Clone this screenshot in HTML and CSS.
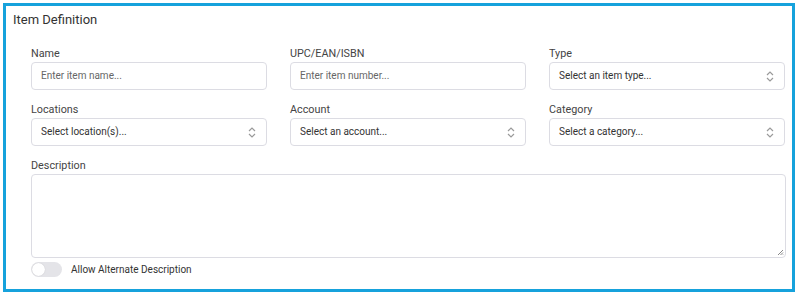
FILE: index.html
```html
<html>
	<head>
		<title>Item Definition</title>
		<link rel="stylesheet" href="styles.css">
	</head>
	<body>
		<div class="card">
			<div class="title">Item Definition</div>
			<div class="form">
				<div class="grid">
					<div class="field">
						<div class="label">Name</div>
						<div class="input">Enter item name...</div>
					</div>
					<div class="field">
						<div class="label">UPC/EAN/ISBN</div>
						<div class="input">Enter item number...</div>
					</div>
					<div class="field">
						<div class="label">Type</div>
						<div class="input select">Select an item type...
							<svg class="chev" width="8" height="11" viewBox="0 0 8 11"><path d="M1 4L4 1L7 4M1 7L4 10L7 7" fill="none" stroke="#9a9a9a" stroke-width="1.2"/></svg>
						</div>
					</div>
					<div class="field">
						<div class="label">Locations</div>
						<div class="input select">Select location(s)...
							<svg class="chev" width="8" height="11" viewBox="0 0 8 11"><path d="M1 4L4 1L7 4M1 7L4 10L7 7" fill="none" stroke="#9a9a9a" stroke-width="1.2"/></svg>
						</div>
					</div>
					<div class="field">
						<div class="label">Account</div>
						<div class="input select">Select an account...
							<svg class="chev" width="8" height="11" viewBox="0 0 8 11"><path d="M1 4L4 1L7 4M1 7L4 10L7 7" fill="none" stroke="#9a9a9a" stroke-width="1.2"/></svg>
						</div>
					</div>
					<div class="field">
						<div class="label">Category</div>
						<div class="input select">Select a category...
							<svg class="chev" width="8" height="11" viewBox="0 0 8 11"><path d="M1 4L4 1L7 4M1 7L4 10L7 7" fill="none" stroke="#9a9a9a" stroke-width="1.2"/></svg>
						</div>
					</div>
				</div>
				<div class="field desc">
					<div class="label">Description</div>
					<div class="textarea">
						<svg class="grip" width="7" height="7" viewBox="0 0 7 7"><path d="M6 1L1 6M6 3.5L3.5 6M6 5.5L5.5 6" stroke="#888" stroke-width="1"/></svg>
					</div>
				</div>
				<div class="toggle-row">
					<div class="toggle"><div class="knob"></div></div>
					<span>Allow Alternate Description</span>
				</div>
			</div>
		</div>
	</body>
</html>
```

FILE: styles.css
```css
body {
    margin: 0;
    font-family: Roboto, "Noto Sans", sans-serif;
    background: #fff;
}
.card {
    margin: 3px 0 0 3px;
    width: 786px;
    height: 283px;
    border: 3px solid #16a2dc;
    box-sizing: content-box;
}
.title {
    font-size: 13px;
    line-height: 20px;
    color: #333;
    padding: 4px 0 0 7px;
}
.form {
    padding: 17px 0 0 25px;
    width: 755px;
}
.grid {
    display: grid;
    grid-template-columns: 236px 236px 236px;
    column-gap: 23px;
    row-gap: 13px;
}
.label {
    font-size: 10.8px;
    line-height: 14px;
    color: #444;
    margin-bottom: 1px;
}
.input {
    height: 26px;
    border: 1px solid #dcdce3;
    border-radius: 4px;
    font-size: 10px;
    line-height: 26px;
    color: #666;
    padding-left: 9px;
    position: relative;
}
.select {
    color: #333;
}
.chev {
    position: absolute;
    right: 10px;
    top: 8px;
}
.desc {
    margin-top: 13px;
}
.textarea {
    height: 82px;
    border: 1px solid #dcdce3;
    border-radius: 4px;
    position: relative;
}
.grip {
    position: absolute;
    right: 1px;
    bottom: 1px;
}
.toggle-row {
    display: flex;
    align-items: center;
    margin-top: 4px;
    font-size: 10px;
    color: #333;
}
.toggle {
    width: 31px;
    height: 15px;
    border-radius: 8px;
    background: #e4e4e8;
    position: relative;
    margin-right: 9px;
}
.knob {
    position: absolute;
    left: 1px;
    top: 1px;
    width: 13px;
    height: 13px;
    border-radius: 50%;
    background: #fff;
    box-shadow: 0 0 1px rgba(0,0,0,0.2);
}
```
